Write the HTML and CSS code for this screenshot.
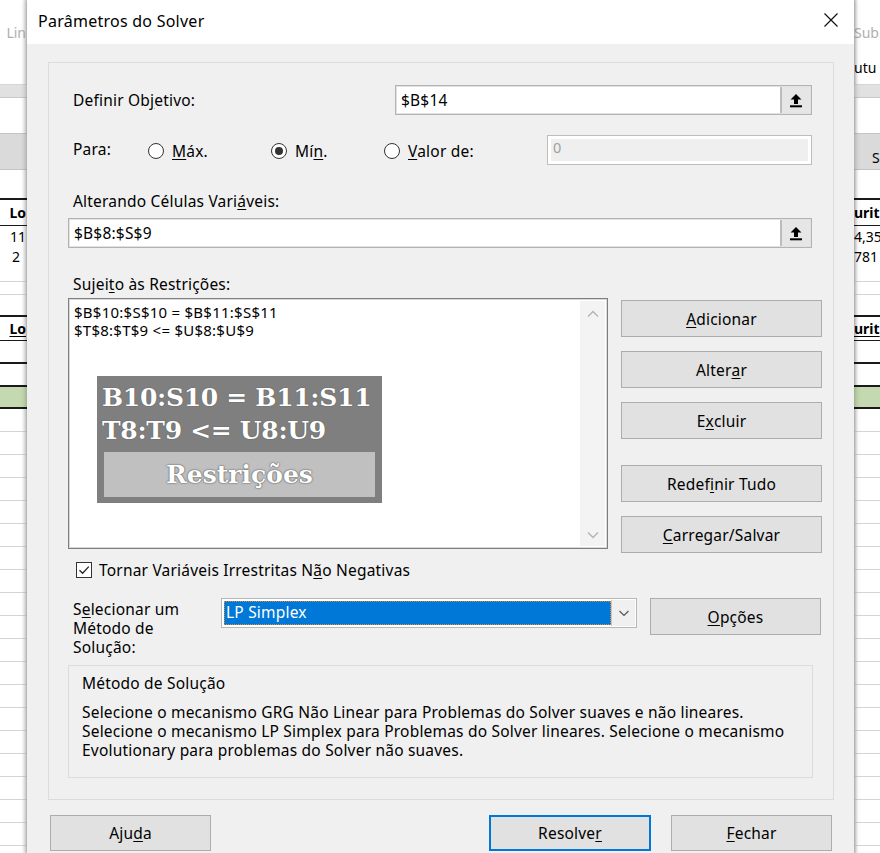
FILE: index.html
```html
<!DOCTYPE html>
<html lang="pt-BR">
<head>
<meta charset="utf-8">
<title>Parâmetros do Solver</title>
<link rel="stylesheet" href="styles.css">
</head>
<body>
<div class="screen">

  <aside class="sheet sheet-left">
    <div class="cell s-top dim">Lin</div>
    <div class="cell s-sub"></div>
    <div class="cell s-band"></div>
    <div class="cell s-gap"></div>
    <div class="cell s-head"></div>
    <div class="cell s-pre"></div>
    <div class="cell s-bold">Lo</div>
    <div class="cell s-val">11</div>
    <div class="cell s-val2 num">2</div>
    <div class="cell s-thin"></div>
    <div class="cell s-pre2"></div>
    <div class="cell s-bold2"><u>Lo</u></div>
    <div class="cell s-blk"></div>
    <div class="cell s-blk2"></div>
    <div class="cell s-green"></div>
    <div class="cell s-line"></div><div class="cell s-line"></div><div class="cell s-line"></div>
    <div class="cell s-line"></div><div class="cell s-line"></div><div class="cell s-line"></div>
    <div class="cell s-line"></div><div class="cell s-line"></div><div class="cell s-line"></div>
    <div class="cell s-line"></div><div class="cell s-line"></div><div class="cell s-line"></div>
    <div class="cell s-line"></div><div class="cell s-line"></div><div class="cell s-line"></div>
    <div class="cell s-line"></div><div class="cell s-line"></div><div class="cell s-line"></div>
    <div class="cell s-line"></div><div class="cell s-line"></div>
  </aside>

  <section class="dialog">
    <header class="titlebar">
      <span class="title">Parâmetros do Solver</span>
      <svg class="close" width="16" height="16" viewBox="0 0 16 16"><path d="M1.5 1.5 L14.5 14.5 M14.5 1.5 L1.5 14.5" stroke="#111" stroke-width="1.2" fill="none"/></svg>
    </header>

    <div class="body">
      <div class="panel">

        <div class="row-objective">
          <label class="label">Definir Ob<u>j</u>etivo:</label>
          <div class="refbox ref-short">
            <span class="reftext">$B$14</span>
            <span class="refbtn"><svg width="14" height="15" viewBox="0 0 14 15"><path d="M7 1 L12.5 6.5 L9 6.5 L9 11 L5 11 L5 6.5 L1.5 6.5 Z" fill="#000"/><rect x="1" y="12.3" width="12" height="2" fill="#000"/></svg></span>
          </div>
        </div>

        <div class="row-radios">
          <span class="label para">Para:</span>
          <span class="radio opt-max"><span class="dot"></span><span><u>M</u>áx.</span></span>
          <span class="radio opt-min"><span class="dot on"></span><span>Mí<u>n</u>.</span></span>
          <span class="radio opt-val"><span class="dot"></span><span><u>V</u>alor de:</span></span>
          <span class="valuebox"><span class="valueinner">0</span></span>
        </div>

        <label class="label cap-changing">Alterando Células Vari<u>á</u>veis:</label>
        <div class="refbox ref-long">
          <span class="reftext">$B$8:$S$9</span>
          <span class="refbtn"><svg width="14" height="15" viewBox="0 0 14 15"><path d="M7 1 L12.5 6.5 L9 6.5 L9 11 L5 11 L5 6.5 L1.5 6.5 Z" fill="#000"/><rect x="1" y="12.3" width="12" height="2" fill="#000"/></svg></span>
        </div>

        <label class="label cap-subject">Sujei<u>t</u>o às Restrições:</label>
        <div class="constraints">
          <div class="listbox">
            <div class="items">
              <div class="item">$B$10:$S$10 = $B$11:$S$11</div>
              <div class="item">$T$8:$T$9 &lt;= $U$8:$U$9</div>
            </div>
            <div class="scroll">
              <svg width="14" height="10" viewBox="0 0 14 10"><path d="M2 7.5 L7 2.5 L12 7.5" stroke="#b4b4b4" stroke-width="1.4" fill="none"/></svg>
              <svg width="14" height="10" viewBox="0 0 14 10"><path d="M2 2.5 L7 7.5 L12 2.5" stroke="#b4b4b4" stroke-width="1.4" fill="none"/></svg>
            </div>
            <div class="callout">
              <div class="callout-line">B10:S10 = B11:S11</div>
              <div class="callout-line">T8:T9 &lt;= U8:U9</div>
              <div class="callout-tag">Restrições</div>
            </div>
          </div>
          <div class="side-buttons">
            <button class="btn"><u>A</u>dicionar</button>
            <button class="btn">Alter<u>a</u>r</button>
            <button class="btn">E<u>x</u>cluir</button>
            <button class="btn btn-spaced">Redef<u>i</u>nir Tudo</button>
            <button class="btn"><u>C</u>arregar/Salvar</button>
          </div>
        </div>

        <div class="check-row">
          <span class="checkbox"><svg width="14" height="14" viewBox="0 0 14 14"><path d="M2.5 7.2 L5.6 10.3 L11.8 3.6" stroke="#222" stroke-width="1.3" fill="none"/></svg></span>
          <span>Tornar Variáveis Irrestritas N<u>ã</u>o Negativas</span>
        </div>

        <div class="method-row">
          <label class="label method-label">S<u>e</u>lecionar um<br>Método de<br>Solução:</label>
          <div class="select">
            <span class="selected">LP Simplex</span>
            <span class="drop"><svg width="12" height="8" viewBox="0 0 12 8"><path d="M1.5 2 L6 6.5 L10.5 2" stroke="#555" stroke-width="1.2" fill="none"/></svg></span>
          </div>
          <button class="btn btn-options"><u>O</u>pções</button>
        </div>

        <fieldset class="describe">
          <div class="describe-title">Método de Solução</div>
          <p class="describe-text">Selecione o mecanismo GRG Não Linear para Problemas do Solver suaves e não lineares.<br>Selecione o mecanismo LP Simplex para Problemas do Solver lineares. Selecione o mecanismo<br>Evolutionary para problemas do Solver não suaves.</p>
        </fieldset>
      </div>

      <div class="footer">
        <button class="btn btn-foot">Aju<u>d</u>a</button>
        <span class="grow"></span>
        <button class="btn btn-foot btn-default">Resolve<u>r</u></button>
        <button class="btn btn-foot"><u>F</u>echar</button>
      </div>
    </div>
  </section>

  <aside class="sheet sheet-right">
    <div class="cell s-top dim">Sub</div>
    <div class="cell s-sub">utu</div>
    <div class="cell s-band"></div>
    <div class="cell s-gap"></div>
    <div class="cell s-head head-s">S</div>
    <div class="cell s-pre"></div>
    <div class="cell s-bold">urit</div>
    <div class="cell s-val">4,35</div>
    <div class="cell s-val2">781</div>
    <div class="cell s-thin"></div>
    <div class="cell s-pre2"></div>
    <div class="cell s-bold2"><u>urit</u></div>
    <div class="cell s-blk"></div>
    <div class="cell s-blk2"></div>
    <div class="cell s-green"></div>
    <div class="cell s-line"></div><div class="cell s-line"></div><div class="cell s-line"></div>
    <div class="cell s-line"></div><div class="cell s-line"></div><div class="cell s-line"></div>
    <div class="cell s-line"></div><div class="cell s-line"></div><div class="cell s-line"></div>
    <div class="cell s-line"></div><div class="cell s-line"></div><div class="cell s-line"></div>
    <div class="cell s-line"></div><div class="cell s-line"></div><div class="cell s-line"></div>
    <div class="cell s-line"></div><div class="cell s-line"></div><div class="cell s-line"></div>
    <div class="cell s-line"></div><div class="cell s-line"></div>
  </aside>

</div>
</body>
</html>
```

FILE: styles.css
```css
* { box-sizing: border-box; }

html, body {
  margin: 0;
  padding: 0;
  background: #ffffff;
}

body {
  font-family: "Noto Sans", "Open Sans", sans-serif;
  font-size: 15.5px;
  letter-spacing: 0.2px;
  color: #000;
}

u { text-decoration: underline; text-underline-offset: 2px; }

.screen {
  display: grid;
  grid-template-columns: 27px 827px 26px;
  width: 880px;
  height: 853px;
  overflow: hidden;
}

/* ---------- spreadsheet behind the dialog ---------- */
.sheet {
  display: flex;
  flex-direction: column;
  overflow: hidden;
  font-family: "Noto Sans", sans-serif;
  font-size: 14px;
  letter-spacing: 0;
  white-space: nowrap;
}

.sheet-left { background: linear-gradient(to right, #fff 0, #fff 22px, #e6e6e6 26px, #d0d0d0 27px); }
.sheet-right { background: linear-gradient(to right, #d0d0d0 0, #ececec 2px, #fff 4px); }

.cell {
  flex: none;
  display: flex;
  align-items: center;
  line-height: 1;
}
.sheet-left .cell { justify-content: flex-end; padding-right: 1px; overflow: hidden; }
.sheet-left .cell.num { padding-right: 7px; }

.dim { color: #b0b0b0; }

.s-top { height: 52px; padding-top: 14px; }
.s-sub { height: 33px; border-bottom: 1px solid #d6d6d6; }
.s-band { height: 13px; background: #e1e1e1; border-bottom: 1px solid #c9c9c9; }
.s-gap { height: 35px; }
.s-head { height: 37px; background: #dadada; border-top: 1px solid #c4c4c4; border-bottom: 1px solid #c4c4c4; }
.head-s { align-items: flex-end; padding-bottom: 4px; padding-left: 18px; }
.s-pre { height: 30px; border-bottom: 2px solid #1a1a1a; }
.s-bold { height: 26px; font-weight: 700; border-bottom: 1px solid #1a1a1a; }
.s-val { height: 22px; }
.s-val2 { height: 34px; align-items: flex-start; padding-top: 2px; border-bottom: 1px solid #d4d4d4; }
.s-thin { height: 13px; border-bottom: 1px solid #d4d4d4; }
.s-pre2 { height: 22px; border-bottom: 2px solid #1a1a1a; }
.s-bold2 { height: 24px; font-weight: 700; border-bottom: 1px solid #1a1a1a; }
.s-blk { height: 23px; border-bottom: 2px solid #1a1a1a; }
.s-blk2 { height: 23px; border-bottom: 2px solid #1a1a1a; }
.s-green { height: 22px; background: #c4d9b0; border-bottom: 2px solid #1a1a1a; }
.s-line { height: 23px; border-bottom: 1px solid #d4d4d4; }

/* ---------- dialog ---------- */
.dialog {
  position: relative;
  display: flex;
  flex-direction: column;
  background: #f0f0f0;
  box-shadow: 0 0 5px 1px rgba(0, 0, 0, 0.28);
  z-index: 1;
}

.titlebar {
  height: 44px;
  flex: none;
  background: #fff;
  display: flex;
  align-items: center;
  justify-content: space-between;
  padding: 0 15px 2px 11px;
}

.title {
  font-size: 16px;
  letter-spacing: 0.25px;
}

.close { display: block; margin-top: -2px; }

.body {
  padding: 18px 20px 0 21px;
}

.panel {
  border: 1px solid #dcdcdc;
  padding: 22px 11px 21px 19px;
  display: flex;
  flex-direction: column;
}

.label { display: block; padding-left: 5px; line-height: 20px; }

/* objective row */
.row-objective {
  display: flex;
  align-items: center;
  height: 30px;
}
.row-objective .label { width: 327px; flex: none; }

.refbox {
  display: flex;
  align-items: stretch;
  height: 30px;
  background: #fff;
  border: 1px solid #b3b3b3;
  box-shadow: inset 0 0 0 1px #e2e2e2;
}
.ref-short { width: 417px; }
.ref-long { width: 744px; }

.reftext {
  flex: 1;
  display: flex;
  align-items: center;
  padding-left: 5px;
}

.refbtn {
  width: 30px;
  flex: none;
  display: flex;
  align-items: center;
  justify-content: center;
  background: #e6e6e6;
  border-left: 2px solid #bcbcbc;
  margin: 1px;
}

/* radio row */
.row-radios {
  display: flex;
  align-items: center;
  height: 30px;
  margin-top: 20px;
}
.para { width: 80px; flex: none; margin-top: -2px; }

.radio {
  display: flex;
  align-items: center;
  gap: 8px;
  flex: none;
  margin-top: 2px;
}
.opt-max { width: 123px; }
.opt-min { width: 113px; }
.opt-val { width: 163px; }

.dot {
  width: 16px;
  height: 16px;
  border-radius: 50%;
  border: 1px solid #333;
  background: #fff;
  display: flex;
  align-items: center;
  justify-content: center;
  flex: none;
}
.dot.on::after {
  content: "";
  width: 8px;
  height: 8px;
  border-radius: 50%;
  background: #333;
}

.valuebox {
  width: 265px;
  height: 30px;
  border: 1px solid #bdbdbd;
  background: #fff;
  padding: 3px;
  display: flex;
}
.valueinner {
  flex: 1;
  background: #efefef;
  color: #a0a0a0;
  padding-left: 2px;
  line-height: 16px;
  font-size: 14.5px;
}

/* changing cells */
.cap-changing { margin-top: 26px; }
.ref-long { margin-top: 7px; }

/* constraints */
.cap-subject { margin-top: 26px; }

.constraints {
  display: flex;
  justify-content: space-between;
  margin-top: 4px;
}

.listbox {
  position: relative;
  width: 540px;
  height: 251px;
  background: #fff;
  border: 1px solid #7e7e7e;
  box-shadow: inset 0 0 0 1px #d9d9d9;
  display: flex;
}

.items {
  flex: 1;
  padding: 4px 0 0 5px;
  font-size: 15px;
  letter-spacing: 0.25px;
  line-height: 18px;
}

.scroll {
  width: 25px;
  flex: none;
  background: #f3f3f3;
  margin: 2px 2px 2px 0;
  display: flex;
  flex-direction: column;
  justify-content: space-between;
  align-items: center;
  padding: 8px 0 6px;
}
.scroll svg { display: block; }

.callout {
  position: absolute;
  left: 28px;
  top: 77px;
  width: 285px;
  height: 127px;
  background: #7f7f7f;
  padding: 5px 7px 6px 5px;
  display: flex;
  flex-direction: column;
  font-family: "DejaVu Serif", "Liberation Serif", serif;
  font-weight: 700;
  color: #fff;
  text-shadow: 0 0 1px #3a3a3a;
}
.callout-line {
  font-size: 25px;
  line-height: 33px;
  white-space: nowrap;
  letter-spacing: -0.3px;
}
.callout-tag {
  margin: 5px 0 0 2px;
  height: 49px;
  background: #c0c0c0;
  display: flex;
  align-items: center;
  justify-content: center;
  font-size: 25px;
  letter-spacing: 0;
  text-shadow: 0 0 2px #555, 0 0 1px #555;
}

.side-buttons {
  width: 201px;
  display: flex;
  flex-direction: column;
  gap: 14px;
  padding-top: 2px;
}

.btn {
  font: inherit;
  letter-spacing: 0.2px;
  color: #000;
  background: #e1e1e1;
  border: 1px solid #adadad;
  height: 37px;
  padding: 0;
  display: flex;
  align-items: center;
  justify-content: center;
}
.btn-spaced { margin-top: 12px; }

/* checkbox */
.check-row {
  display: flex;
  align-items: center;
  gap: 7px;
  margin-top: 8px;
  padding-left: 8px;
  height: 18px;
}
.checkbox {
  width: 16px;
  height: 16px;
  border: 1px solid #333;
  background: #fff;
  display: flex;
  align-items: center;
  justify-content: center;
  flex: none;
}
.checkbox svg { display: block; }

/* method row */
.method-row {
  display: flex;
  align-items: flex-start;
  margin-top: 19px;
}
.method-label {
  width: 153px;
  flex: none;
  line-height: 19px;
  padding-top: 2px;
}

.select {
  width: 416px;
  height: 30px;
  border: 1px solid #b7b7b7;
  background: #fff;
  display: flex;
  padding: 1px;
}
.selected {
  flex: 1;
  background: #0078d7;
  color: #fff;
  outline: 1px dotted #e08a30;
  outline-offset: -1px;
  padding-left: 2px;
  line-height: 22px;
  margin: 1px 0 1px 1px;
}
.drop {
  width: 24px;
  flex: none;
  display: flex;
  align-items: center;
  justify-content: center;
  background: #f0f0f0;
  border-left: 1px solid #c8c8c8;
}

.btn-options {
  width: 171px;
  margin-left: 13px;
}

/* description */
.describe {
  margin: 8px 9px 0 0;
  padding: 7px 10px 0 13px;
  border: 1px solid #dcdcdc;
  height: 113px;
  min-width: 0;
}
.describe-title { line-height: 20px; }
.describe-text {
  margin: 10px 0 0;
  line-height: 19px;
  white-space: nowrap;
}

/* footer */
.footer {
  display: flex;
  margin-top: 15px;
  padding: 0 2px 0 2px;
  gap: 20px;
}
.btn-foot { width: 161px; height: 36px; }
.grow { flex: 1; }
.btn-default { border: 2px solid #0078d7; width: 162px; }
```
